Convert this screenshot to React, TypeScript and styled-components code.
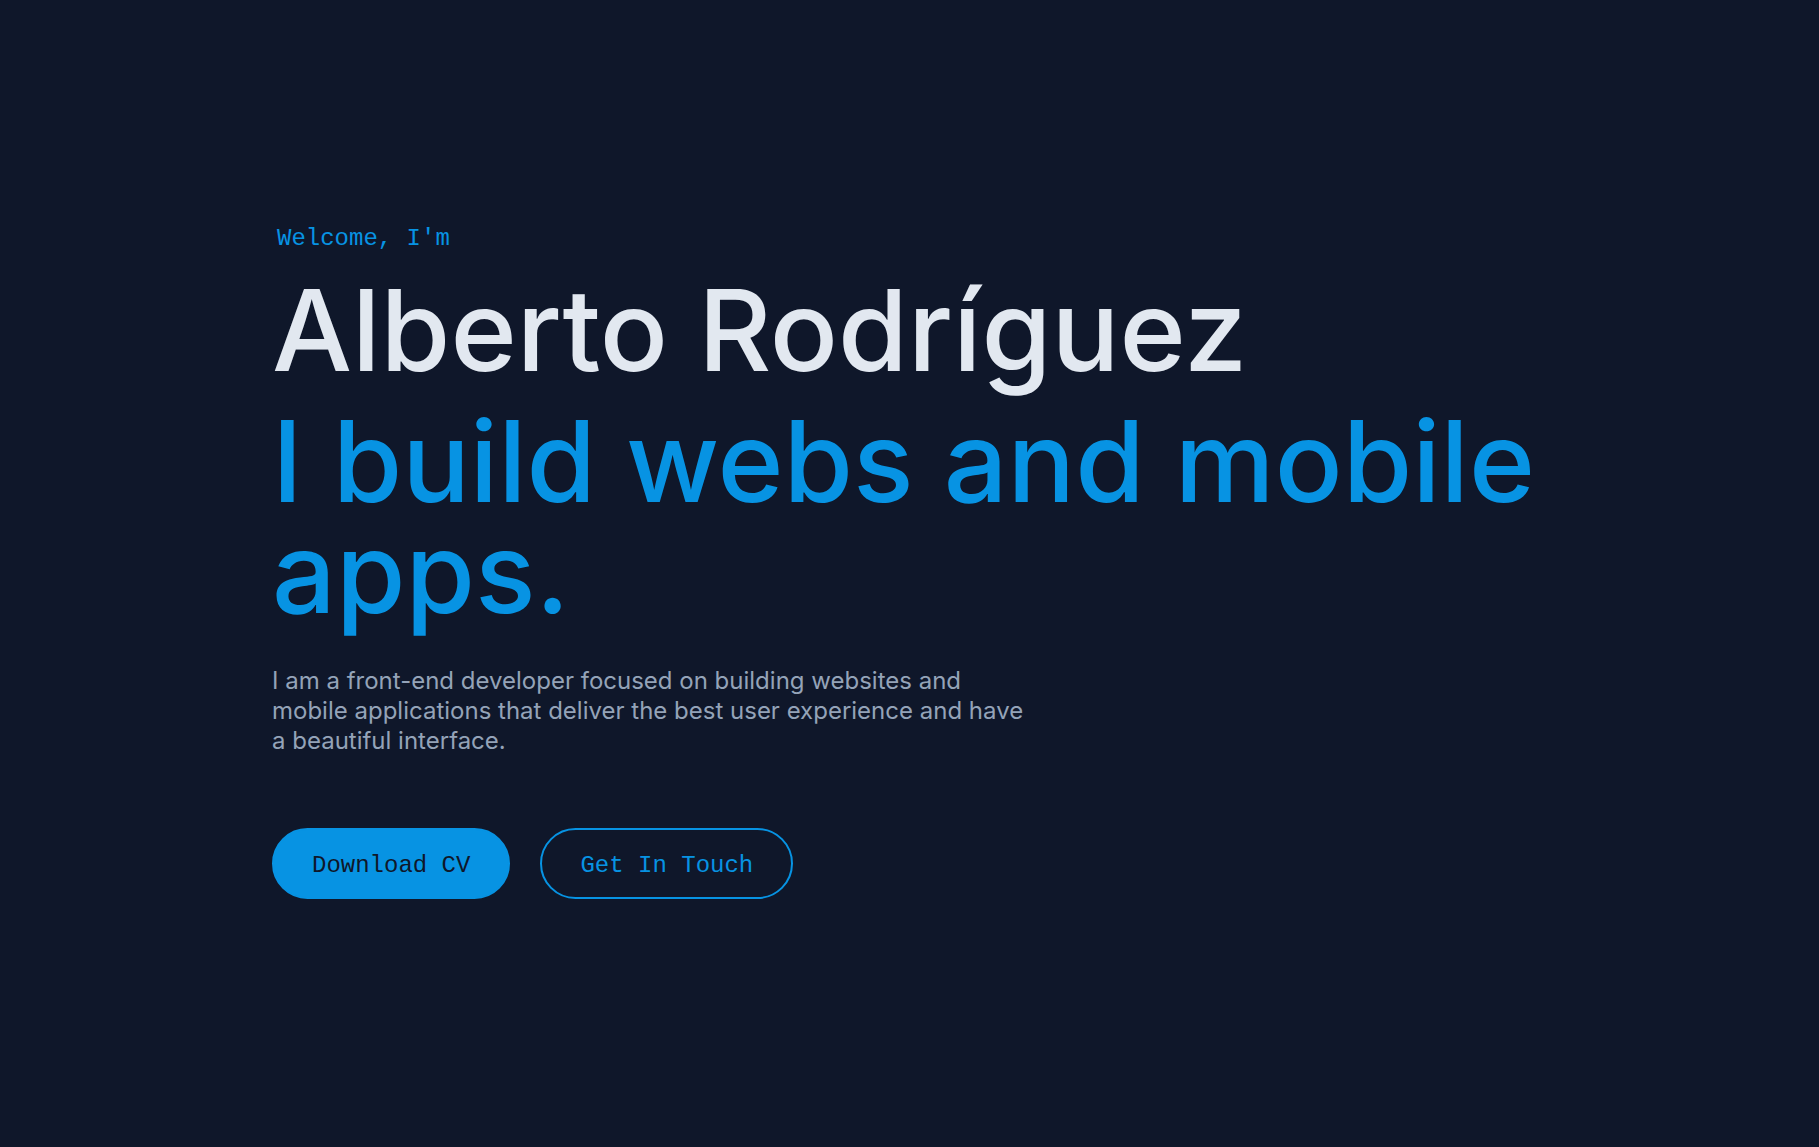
import React from "react";
import styled, { createGlobalStyle } from "styled-components";

const GlobalStyle = createGlobalStyle`
  html, body {
    margin: 0;
    padding: 0;
    background: #0f172a;
  }
  * { box-sizing: border-box; }
`;

const Hero = styled.section`
  min-height: 100vh;
  display: flex;
  flex-direction: column;
  justify-content: center;
  padding: 0 0 27px;
  background: #0f172a;
`;

const Container = styled.div`
  width: 1275px;
  margin: 0 auto;
  display: flex;
  flex-direction: column;
  align-items: flex-start;
`;

const Greeting = styled.p`
  margin: 0 0 0 5px;
  font-family: "Liberation Mono", "DejaVu Sans Mono", monospace;
  font-size: 24px;
  line-height: 36px;
  color: #0793e3;
`;

const Heading = styled.h1<{ $tone: "light" | "accent" }>`
  margin: ${(p) => (p.$tone === "light" ? "18px 0 0" : "20px 0 0")};
  font-family: Inter, "Noto Sans", sans-serif;
  font-weight: 500;
  font-size: ${(p) => (p.$tone === "light" ? "113px" : "112.5px")};
  line-height: 111px;
  letter-spacing: 0;
  color: ${(p) => (p.$tone === "light" ? "#e2e8f0" : "#0793e3")};
`;

const Intro = styled.p`
  margin: 38px 0 0;
  max-width: 760px;
  font-family: Inter, "Noto Sans", sans-serif;
  font-size: 24px;
  line-height: 30px;
  color: #94a3b8;
`;

const Actions = styled.div`
  display: flex;
  gap: 30px;
  margin-top: 72px;
`;

const Button = styled.a<{ $variant: "solid" | "outline" }>`
  display: inline-flex;
  align-items: center;
  justify-content: center;
  padding: 19px 38px 15px;
  border: 2px solid #0793e3;
  border-radius: 999px;
  font-family: "Liberation Mono", "DejaVu Sans Mono", monospace;
  font-size: 24px;
  line-height: 33px;
  text-decoration: none;
  cursor: pointer;
  background: ${(p) => (p.$variant === "solid" ? "#0793e3" : "transparent")};
  color: ${(p) => (p.$variant === "solid" ? "#0f172a" : "#0793e3")};
`;

export default function App() {
  return (
    <>
      <GlobalStyle />
      <Hero>
        <Container>
          <Greeting>Welcome, I'm</Greeting>
          <Heading $tone="light">Alberto Rodríguez</Heading>
          <Heading $tone="accent">I build webs and mobile apps.</Heading>
          <Intro>
            I am a front-end developer focused on building websites and mobile
            applications that deliver the best user experience and have a
            beautiful interface.
          </Intro>
          <Actions>
            <Button $variant="solid">Download CV</Button>
            <Button $variant="outline">Get In Touch</Button>
          </Actions>
        </Container>
      </Hero>
    </>
  );
}
